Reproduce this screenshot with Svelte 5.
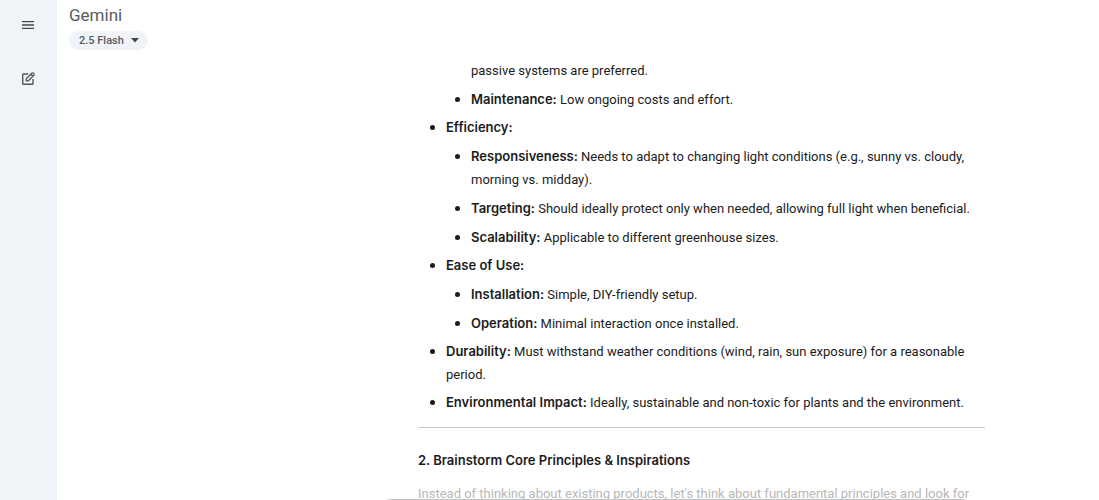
<script>
  const groups = [
    {
      title: 'Efficiency:',
      items: [
        ['Responsiveness:', 'Needs to adapt to changing light conditions (e.g., sunny vs. cloudy, morning vs. midday).'],
        ['Targeting:', 'Should ideally protect only when needed, allowing full light when beneficial.'],
        ['Scalability:', 'Applicable to different greenhouse sizes.']
      ]
    },
    {
      title: 'Ease of Use:',
      items: [
        ['Installation:', 'Simple, DIY-friendly setup.'],
        ['Operation:', 'Minimal interaction once installed.']
      ]
    },
    { title: 'Durability:', text: 'Must withstand weather conditions (wind, rain, sun exposure) for a reasonable period.' },
    { title: 'Environmental Impact:', text: 'Ideally, sustainable and non-toxic for plants and the environment.' }
  ];
</script>

<div class="shell">
  <nav class="rail">
    <button aria-label="Main menu">
      <svg width="12" height="8" viewBox="0 0 12 8">
        <path d="M0 0h12v1.3H0zM0 3.3h12v1.4H0zM0 6.7h12V8H0z" fill="#444746" />
      </svg>
    </button>
    <button aria-label="New chat">
      <svg width="16" height="16" viewBox="0 0 16 16" fill="none" stroke="#50555a" stroke-width="1.4">
        <path d="M8.2 3H3.6Q2.7 3 2.7 3.9v8.5q0 .9.9.9h8.5q.9 0 .9-.9V8" />
        <path d="M6.3 9.8V7.7l5.7-5.6q.6-.5 1.2 0l.8.8q.5.6 0 1.2L8.4 9.8zM11 3.3l1.9 1.9" stroke-width="1.3" />
      </svg>
    </button>
  </nav>

  <div class="page">
    <header>
      <span class="brand">Gemini</span>
      <button class="model">
        2.5 Flash
        <svg width="8" height="5" viewBox="0 0 8 5"><path d="M0 0h8L4 4.5z" fill="#444746" /></svg>
      </button>
    </header>

    <main>
      <article>
        <ul class="outer">
          <li class="continued">
            <ul>
              <li class="continued">passive systems are preferred.</li>
              <li><b>Maintenance:</b> Low ongoing costs and effort.</li>
            </ul>
          </li>
          {#each groups as group}
            <li>
              <b>{group.title}</b> {group.text ?? ''}
              {#if group.items}
                <ul>
                  {#each group.items as [name, text]}
                    <li><b>{name}</b> {text}</li>
                  {/each}
                </ul>
              {/if}
            </li>
          {/each}
        </ul>
        <hr />
        <h3>2. Brainstorm Core Principles &amp; Inspirations</h3>
        <p>Instead of thinking about existing products, let's think about fundamental principles and look for</p>
      </article>
    </main>
    <div class="composer"></div>
  </div>
</div>

<style>
  :global(body) {
    margin: 0;
    background: #fff;
  }
  .shell {
    display: flex;
    height: 100vh;
    overflow: hidden;
    font-family: Roboto, sans-serif;
    font-size: 13px;
    line-height: 23px;
    color: #1b1c1d;
  }
  button {
    border: 0;
    padding: 0;
    font: inherit;
    cursor: pointer;
  }
  .rail {
    flex: 0 0 57px;
    box-sizing: border-box;
    display: flex;
    flex-direction: column;
    align-items: center;
    gap: 22px;
    padding: 9px 2px 0 0;
    background: #f0f4f9;
  }
  .rail button {
    display: grid;
    place-items: center;
    width: 32px;
    height: 32px;
    border-radius: 50%;
    background: none;
  }
  .page {
    position: relative;
    flex: 1;
    min-width: 0;
  }
  header {
    display: flex;
    flex-direction: column;
    align-items: flex-start;
    gap: 6px;
    padding: 6px 12px 0;
  }
  .brand {
    font-size: 17px;
    line-height: 19px;
    color: #575b5f;
  }
  .model {
    display: flex;
    align-items: center;
    gap: 7px;
    height: 19px;
    padding: 0 9px 0 10px;
    border-radius: 10px;
    background: #f0f4f9;
    font-size: 11px;
    font-weight: 500;
    line-height: 19px;
    color: #575b5f;
  }
  main {
    display: grid;
    grid-template-columns: minmax(16px, 1fr) minmax(0, 567px) 114px;
    padding-top: 9px;
  }
  article {
    grid-column: 2;
  }
  ul {
    margin: 0;
    padding-left: 25px;
    list-style: disc;
  }
  .outer {
    padding-left: 28px;
  }
  .outer > li + li {
    margin-top: 5px;
  }
  li ul li {
    margin-top: 6px;
  }
  li.continued {
    list-style: none;
    margin-top: 0;
  }
  li::marker {
    font-size: 15px;
  }
  b {
    font-family: Inter, sans-serif;
    font-weight: 600;
    line-height: 1;
  }
  hr {
    margin: 13px 0 0;
    border: 0;
    border-top: 1px solid #c4c7c5;
  }
  h3 {
    margin: 21px 0 10px;
    font-family: Inter, sans-serif;
    font-size: 13px;
    font-weight: 600;
    line-height: 23px;
  }
  p {
    margin: 0;
    color: #b8b8b8;
  }
  .composer {
    position: absolute;
    left: 329px;
    right: 132px;
    bottom: 0;
    height: 1px;
    background: linear-gradient(90deg, transparent, #c0c2c4 5px, #c0c2c4 calc(100% - 5px), transparent);
  }
</style>
